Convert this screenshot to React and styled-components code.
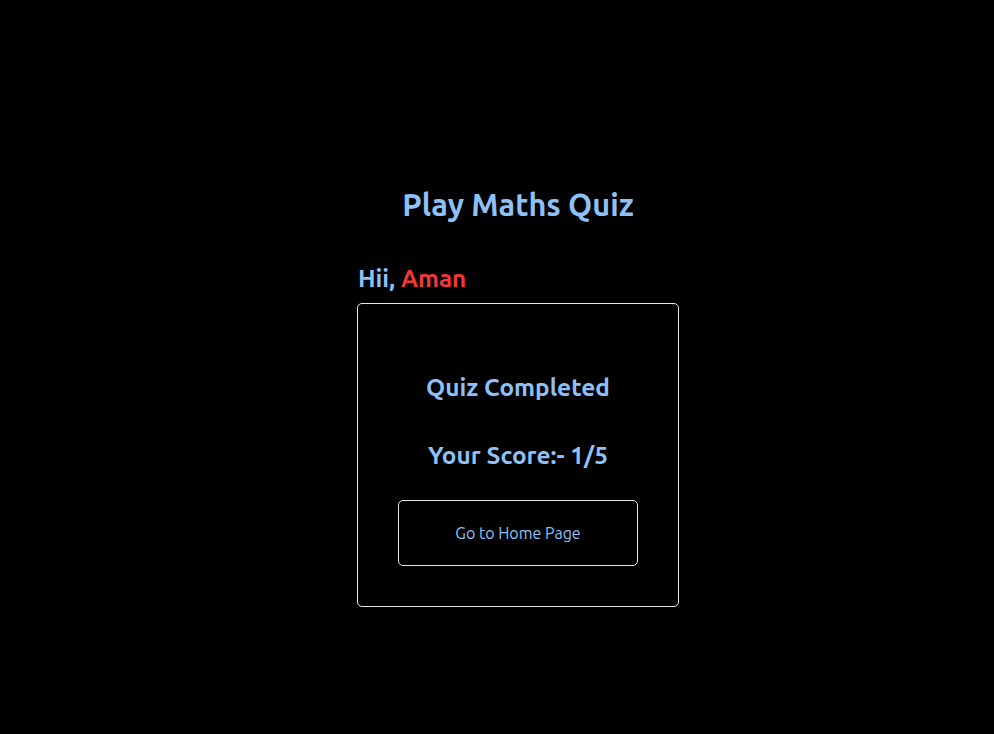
import React from "react";
import styled, { createGlobalStyle } from "styled-components";

const Global = createGlobalStyle`
  html, body { margin: 0; padding: 0; background: #000; }
  body { font-family: "Ubuntu", "Open Sans", "Noto Sans", sans-serif; }
`;

const Page = styled.div`
  min-height: 734px;
  background: #000;
  display: flex;
  justify-content: center;
  padding-left: 42px;
  box-sizing: border-box;
`;

const Column = styled.div`
  width: 322px;
  padding-top: 187px;
  display: flex;
  flex-direction: column;
`;

const Title = styled.h1`
  margin: 0 -60px 41px;
  text-align: center;
  font-size: 30.7px;
  line-height: 36px;
  font-weight: 700;
  color: #8ec1f9;
`;

const Greeting = styled.h2`
  margin: 0 0 11px 1px;
  font-size: 24.3px;
  line-height: 28px;
  font-weight: 700;
  color: #8ec1f9;
`;

const Name = styled.span`
  color: #f0393b;
`;

const Card = styled.div`
  border: 1px solid #e6e6e6;
  border-radius: 5px;
  padding: 69px 40px 40px;
  display: flex;
  flex-direction: column;
  align-items: center;
`;

const Line = styled.h3`
  margin: 0 0 ${(p) => p.$gap}px;
  font-size: 24.4px;
  line-height: 28px;
  font-weight: 700;
  color: #8ec1f9;
  text-align: center;
`;

const Button = styled.button`
  width: 240px;
  height: 66px;
  background: #000;
  border: 1px solid #e6e6e6;
  border-radius: 5px;
  color: #8ec1f9;
  font-family: inherit;
  font-size: 16px;
  cursor: pointer;
`;

export default function App() {
  return (
    <>
      <Global />
      <Page>
        <Column>
          <Title>Play Maths Quiz</Title>
          <Greeting>
            Hii, <Name>Aman</Name>
          </Greeting>
          <Card>
            <Line $gap={40}>Quiz Completed</Line>
            <Line $gap={31}>Your Score:- 1/5</Line>
            <Button>Go to Home Page</Button>
          </Card>
        </Column>
      </Page>
    </>
  );
}
